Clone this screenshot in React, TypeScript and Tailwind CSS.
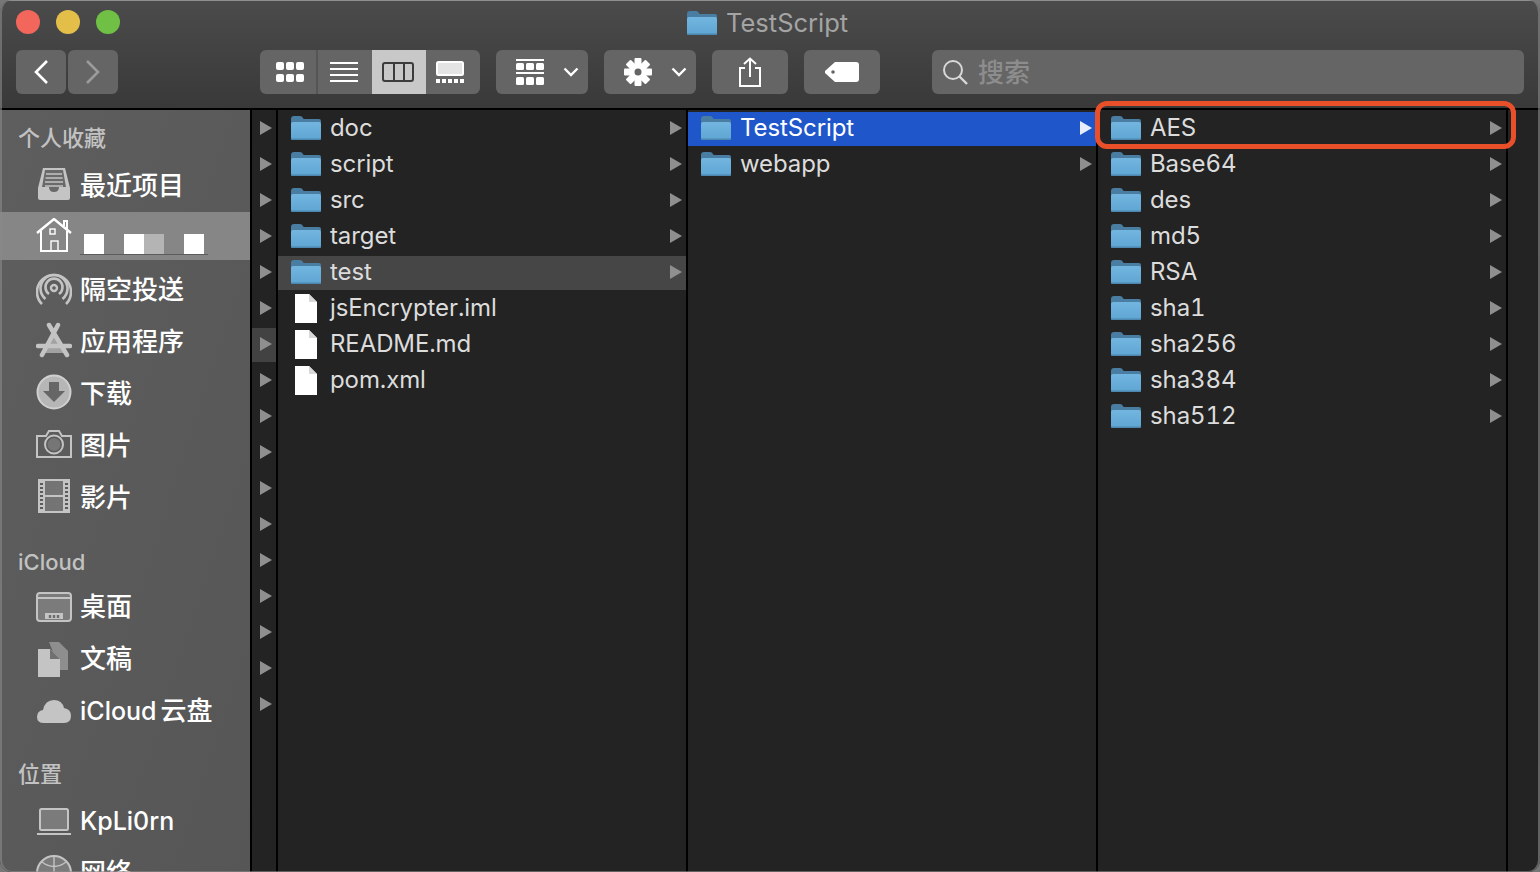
import type { ReactNode } from "react";

const cjk = "font-['Inter','Noto_Sans_CJK_SC',sans-serif]";

function Folder() {
  return (
    <svg viewBox="0 0 30 24" className="w-[30px] h-6 shrink-0">
      <defs>
        <linearGradient id="folderBody" x1="0" y1="0" x2="0" y2="1">
          <stop offset="0" stopColor="#72b6e0" />
          <stop offset="1" stopColor="#5fa5d3" />
        </linearGradient>
      </defs>
      <path d="M0 3 Q0 0 3 0 H9 Q11 0 12 2 L12.6 3 H28 Q30 3 30 5 V9 H0Z" fill="#4a7da2" />
      <rect x="0" y="6" width="30" height="18" rx="2" fill="url(#folderBody)" />
      <rect x="0" y="22.5" width="30" height="1.5" rx="0.75" fill="#4c87b0" />
    </svg>
  );
}

function FileIcon() {
  return (
    <svg viewBox="0 0 22 29" className="w-[22px] h-[29px] shrink-0 ml-1">
      <path d="M0 0 H14 L22 8 V29 H0Z" fill="#ffffff" />
      <path d="M14 0 L22 8 H14Z" fill="#d8d8d8" />
    </svg>
  );
}

function Arrow({ dim = true }: { dim?: boolean }) {
  return (
    <svg viewBox="0 0 12 14" className="w-3 h-3.5 shrink-0">
      <path d="M0 0 L12 7 L0 14Z" fill={dim ? "#8f8f8f" : "#e8effb"} />
    </svg>
  );
}

function Row({
  name,
  kind = "folder",
  arrow = true,
  bg = "",
  active = false,
}: {
  name: string;
  kind?: "folder" | "file";
  arrow?: boolean;
  bg?: string;
  active?: boolean;
}) {
  return (
    <div className="h-9 pt-0.5">
      <div className={`flex h-[34px] items-center pb-0.5 pl-[13px] pr-1 ${bg}`}>
        <div className="w-[39px] shrink-0">{kind === "folder" ? <Folder /> : <FileIcon />}</div>
        <span className={`flex-1 text-[24px] leading-none tracking-[-0.1px] tabular-nums ${active ? "text-white" : "text-[#dcdcdc]"}`}>{name}</span>
        {arrow && <Arrow dim={!active} />}
      </div>
    </div>
  );
}

function ToolButton({ className = "", children }: { className?: string; children: ReactNode }) {
  return <div className={`flex h-11 items-center justify-center rounded-md bg-[#656565] ${className}`}>{children}</div>;
}

function Chevron() {
  return (
    <svg viewBox="0 0 16 10" className="w-4 h-2.5">
      <path d="M1.5 1.5 L8 8 L14.5 1.5" fill="none" stroke="#fff" strokeWidth="2.4" />
    </svg>
  );
}

function GridViewIcon() {
  return (
    <svg viewBox="0 0 28 20" className="w-7 h-5">
      {[0, 10, 20].map((x) => (
        <g key={x}>
          <rect x={x} y="0" width="8" height="8" rx="2" fill="#fff" />
          <rect x={x} y="12" width="8" height="8" rx="2" fill="#fff" />
        </g>
      ))}
    </svg>
  );
}

function ListViewIcon() {
  return (
    <svg viewBox="0 0 28 20" className="w-7 h-5">
      {[1, 7, 13, 19].map((y) => (
        <rect key={y} x="0" y={y - 1} width="28" height="2" fill="#fff" />
      ))}
    </svg>
  );
}

function ColumnViewIcon() {
  return (
    <svg viewBox="0 0 32 20" className="w-8 h-5">
      <rect x="1" y="1" width="30" height="18" rx="2" fill="none" stroke="#3c3c3c" strokeWidth="2" />
      <rect x="11" y="1" width="2" height="18" fill="#3c3c3c" />
      <rect x="21" y="1" width="2" height="18" fill="#3c3c3c" />
    </svg>
  );
}

function GalleryViewIcon() {
  return (
    <svg viewBox="0 0 28 22" className="w-7 h-[22px]">
      <rect x="1" y="1" width="26" height="13" rx="1.5" fill="#e4e4e4" stroke="#fff" strokeWidth="2" />
      {[0, 6, 12, 18, 24].map((x) => (
        <rect key={x} x={x} y="18" width="4" height="4" fill="#fff" />
      ))}
    </svg>
  );
}

function GroupIcon() {
  return (
    <svg viewBox="0 0 28 26" className="w-7 h-[26px]">
      <rect x="0" y="0" width="28" height="2" fill="#fff" />
      <rect x="0" y="13" width="28" height="2" fill="#fff" />
      {[0, 10, 20].map((x) => (
        <g key={x}>
          <rect x={x} y="4" width="8" height="7" rx="1.5" fill="#fff" />
          <rect x={x} y="18" width="8" height="8" rx="1.5" fill="#fff" />
        </g>
      ))}
    </svg>
  );
}

function GearIcon() {
  return (
    <svg viewBox="0 0 28 28" className="w-7 h-7">
      {[0, 45, 90, 135].map((a) => (
        <rect key={a} x="10.5" y="0" width="7" height="28" rx="1" fill="#fff" transform={`rotate(${a} 14 14)`} />
      ))}
      <circle cx="14" cy="14" r="9" fill="#fff" />
      <circle cx="14" cy="14" r="3.5" fill="#656565" />
    </svg>
  );
}

function ShareIcon() {
  return (
    <svg viewBox="0 0 22 30" className="w-[22px] h-[30px]">
      <path d="M6 11 H1 V29 H21 V11 H16" fill="none" stroke="#fff" strokeWidth="2" />
      <path d="M11 20 V2 M5 7 L11 1.5 L17 7" fill="none" stroke="#fff" strokeWidth="2" />
    </svg>
  );
}

function TagIcon() {
  return (
    <svg viewBox="0 0 34 20" className="w-[34px] h-5">
      <path d="M10 0 H31 Q34 0 34 3 V17 Q34 20 31 20 H10 L0 11 V9Z" fill="#fff" />
      <circle cx="8" cy="10" r="1.8" fill="#656565" />
    </svg>
  );
}

function SidebarIcon({ children }: { children: ReactNode }) {
  return (
    <svg viewBox="0 0 36 36" className="w-9 h-9 shrink-0" fill="none" stroke="#c4c4c4" strokeWidth="2">
      {children}
    </svg>
  );
}

const RecentsIcon = (
  <SidebarIcon>
    <path d="M7 2 H29 L34 22 V32 Q34 34 32 34 H4 Q2 34 2 32 V22Z" fill="#c4c4c4" stroke="none" />
    <path d="M9 4 H27 L30 21 H23 Q23 26 18 26 Q13 26 13 21 H6Z" fill="#6a6a6a" stroke="none" />
    <path d="M10 8 H26 M9.5 12 H26.5 M9 16 H27 M9 20 H27" stroke="#c4c4c4" strokeWidth="1.6" />
  </SidebarIcon>
);

const HomeIcon = (
  <svg viewBox="0 0 36 36" className="w-9 h-9 shrink-0" fill="none" stroke="#fff" strokeWidth="2">
    <path d="M1 15 L18 1 L35 15" strokeWidth="2.4" />
    <path d="M28 8 V3 H31 V11" />
    <path d="M5 13 V33 H31 V13" />
    <rect x="14" y="11" width="5" height="5" strokeWidth="1.4" />
    <rect x="15" y="23" width="7" height="10" strokeWidth="1.4" />
  </svg>
);

const AirdropIcon = (
  <SidebarIcon>
    <circle cx="18" cy="18" r="3" strokeWidth="2.4" />
    <path d="M13 24 A8.5 8.5 0 1 1 23 24" strokeWidth="2.6" />
    <path d="M9.5 29 A13.5 13.5 0 1 1 26.5 29" strokeWidth="2.6" />
    <path d="M6 34 A17 17 0 1 1 30 34" strokeWidth="2.6" />
  </SidebarIcon>
);

const AppsIcon = (
  <SidebarIcon>
    <path d="M17.5 10 L7 31 H29Z" fill="#a2a2a2" stroke="none" />
    <path d="M22 3 L6 33 M13 3 L31 33" stroke="#c4c4c4" strokeWidth="4.5" strokeLinecap="round" />
    <path d="M2 24 H34" stroke="#c4c4c4" strokeWidth="4.5" strokeLinecap="round" />
  </SidebarIcon>
);

const DownloadIcon = (
  <SidebarIcon>
    <circle cx="18" cy="18" r="16.5" fill="#b6b6b6" stroke="#d0d0d0" strokeWidth="2" />
    <path d="M13 8 H23 V17 H29 L18 28 L7 17 H13Z" fill="#666666" stroke="none" />
  </SidebarIcon>
);

const PhotoIcon = (
  <SidebarIcon>
    <path d="M1 10 H10 L13 5 H23 L26 10 H35 V31 H1Z" />
    <circle cx="18" cy="18.5" r="9" />
    <circle cx="18" cy="18.5" r="6.5" fill="#767676" stroke="none" />
  </SidebarIcon>
);

const MovieIcon = (
  <svg viewBox="0 0 32 34" className="w-8 h-[34px] shrink-0 mx-0.5" fill="none" stroke="#c4c4c4" strokeWidth="2">
    <rect x="1" y="1" width="30" height="32" />
    <path d="M6 1 V33 M26 1 V33 M6 17 H26" />
    <rect x="7" y="2" width="18" height="14" fill="#747474" stroke="none" />
    <rect x="7" y="18" width="18" height="14" fill="#747474" stroke="none" />
    <path d="M3.5 2 V32 M28.5 2 V32" stroke="#c4c4c4" strokeWidth="3" strokeDasharray="2 2" />
  </svg>
);

const DesktopIcon = (
  <SidebarIcon>
    <rect x="1" y="4" width="34" height="28" rx="3" fill="#7b7b7b" strokeWidth="2" />
    <path d="M1 9 H35" strokeWidth="2" />
    <rect x="9" y="24" width="18" height="6" fill="#c4c4c4" stroke="none" />
    <path d="M14 26 V29 M18 26 V29 M22 26 V29" stroke="#6d6d6d" strokeWidth="2.4" />
  </SidebarIcon>
);

const DocsIcon = (
  <SidebarIcon>
    <path d="M13 1 H23 L32 10 V29 H24 Z" fill="#8e8e8e" stroke="none" />
    <path d="M2 8 H14 L24 18 V36 H2Z" fill="#c4c4c4" stroke="none" />
    <path d="M14 8 L24 18 H14Z" fill="#717171" stroke="none" />
  </SidebarIcon>
);

const CloudIcon = (
  <SidebarIcon>
    <path d="M8 30 Q1 30 1 24 Q1 18 7 17 Q9 7 18 7 Q26 7 28 15 Q35 16 35 23 Q35 30 28 30Z" fill="#c4c4c4" stroke="none" />
  </SidebarIcon>
);

const LaptopIcon = (
  <SidebarIcon>
    <rect x="4" y="6" width="28" height="21" rx="1.5" fill="#7b7b7b" />
    <path d="M1 31 H35" />
  </SidebarIcon>
);

const NetworkIcon = (
  <SidebarIcon>
    <circle cx="18" cy="18" r="17" fill="#7b7b7b" />
    <path d="M1 18 H35 M18 1 V35 M6 7 Q18 16 30 7 M6 29 Q18 20 30 29" strokeWidth="1.4" />
  </SidebarIcon>
);

function SideItem({ icon, label, active = false, labelClass = "text-[26px]", children }: { icon: ReactNode; label?: string; active?: boolean; labelClass?: string; children?: ReactNode }) {
  return (
    <div className={`flex h-12 items-center gap-2 pl-9 ${active ? "bg-[#868686]" : ""}`}>
      {icon}
      {label && <span className={`${cjk} ${labelClass} leading-none font-medium text-white whitespace-nowrap`}>{label}</span>}
      {children}
    </div>
  );
}

function SideHeading({ label, className }: { label: string; className: string }) {
  return <div className={`${cjk} pl-[18px] text-[22px] leading-7 font-medium text-[#c2c2c2] ${className}`}>{label}</div>;
}

export default function App() {
  return (
    <div className="relative w-[1540px] h-[872px] overflow-hidden bg-[#777777]">
      <div className={`${cjk} flex h-full flex-col overflow-hidden rounded-[12px]`}>
        <header className="h-[108px] shrink-0 border-t border-[#8f8f8f] bg-gradient-to-b from-[#4b4b4b] to-[#393939] px-4">
          <div className="relative flex h-[49px] items-start gap-4 pt-[9px]">
            <span className="h-6 w-6 rounded-full bg-[#f2665c]" />
            <span className="h-6 w-6 rounded-full bg-[#e3bf4a]" />
            <span className="h-6 w-6 rounded-full bg-[#6fc044]" />
            <div className="absolute left-[671px] top-[8px] flex items-center gap-[9px] text-[25.5px] leading-7 text-[#a4a4a4]">
              <Folder />
              <span>TestScript</span>
            </div>
          </div>
          <div className="flex items-center">
            <ToolButton className="w-[50px]">
              <svg viewBox="0 0 16 26" className="w-4 h-[26px]"><path d="M14 2 L3 13 L14 24" fill="none" stroke="#fff" strokeWidth="2.6" /></svg>
            </ToolButton>
            <ToolButton className="ml-0.5 w-[50px]">
              <svg viewBox="0 0 16 26" className="w-4 h-[26px]"><path d="M2 2 L13 13 L2 24" fill="none" stroke="#9b9b9b" strokeWidth="2.6" /></svg>
            </ToolButton>
            <div className="ml-[142px] flex h-11 w-[220px] overflow-hidden rounded-md bg-[#656565]">
              <div className="flex w-[58px] items-center justify-center border-r-2 border-[#555] pl-1"><GridViewIcon /></div>
              <div className="flex w-[54px] items-center justify-center pr-0.5"><ListViewIcon /></div>
              <div className="flex w-[54px] items-center justify-center bg-[#c8c8c8] pr-0.5"><ColumnViewIcon /></div>
              <div className="flex w-[54px] items-center justify-center pr-1.5"><GalleryViewIcon /></div>
            </div>
            <ToolButton className="ml-4 w-[92px] justify-start gap-[19px] pl-5"><GroupIcon /><Chevron /></ToolButton>
            <ToolButton className="ml-4 w-[92px] justify-start gap-[19px] pl-5"><GearIcon /><Chevron /></ToolButton>
            <ToolButton className="ml-4 w-[76px]"><ShareIcon /></ToolButton>
            <ToolButton className="ml-4 w-[76px]"><TagIcon /></ToolButton>
            <div className="ml-[52px] flex h-11 w-[592px] items-center gap-2.5 rounded-md bg-[#656565] pl-2.5">
              <svg viewBox="0 0 26 26" className="w-[26px] h-[26px]">
                <circle cx="11" cy="11" r="9" fill="none" stroke="#d8d8d8" strokeWidth="2" />
                <path d="M17.5 17.5 L25 25" stroke="#d8d8d8" strokeWidth="2.4" />
              </svg>
              <span className="pt-0.5 text-[26px] leading-none font-medium text-[#8d8d8d]">搜索</span>
            </div>
          </div>
        </header>
        <div className="flex min-h-0 flex-1 border-t-2 border-black bg-[#232323]">
          <aside className="w-[250px] shrink-0 overflow-hidden bg-gradient-to-br from-[#5e5e5e] to-[#565656]">
            <SideHeading label="个人收藏" className="pt-[14px]" />
            <div className="mt-2 flex flex-col gap-1">
              <SideItem icon={RecentsIcon} label="最近项目" labelClass="text-[26px] pt-1" />
              <SideItem icon={HomeIcon} active>
                <div className="mt-4 flex flex-col">
                  <div className="ml-1 flex">
                    <span className="h-5 w-5 bg-white" />
                    <span className="ml-5 h-5 w-5 bg-white" />
                    <span className="h-5 w-5 bg-[#b4b4b4]" />
                    <span className="ml-5 h-5 w-5 bg-white" />
                  </div>
                  <span className="h-px w-32 rounded-full bg-[#5c5c5c]" />
                </div>
              </SideItem>
              <SideItem icon={AirdropIcon} label="隔空投送" labelClass="text-[26px] pt-1" />
              <SideItem icon={AppsIcon} label="应用程序" labelClass="text-[26px] pt-1" />
              <SideItem icon={DownloadIcon} label="下载" labelClass="text-[26px] pt-1" />
              <SideItem icon={PhotoIcon} label="图片" labelClass="text-[26px] pt-1" />
              <SideItem icon={MovieIcon} label="影片" labelClass="text-[26px] pt-1" />
            </div>
            <SideHeading label="iCloud" className="mt-[28px]" />
            <div className="mt-[7px] flex flex-col gap-1">
              <SideItem icon={DesktopIcon} label="桌面" />
              <SideItem icon={DocsIcon} label="文稿" />
              <SideItem icon={CloudIcon}>
                <span className="whitespace-nowrap text-[25px] leading-none font-medium text-white">
                  iCloud<span className="ml-1 text-[26px]">云盘</span>
                </span>
              </SideItem>
            </div>
            <SideHeading label="位置" className="mt-[25px]" />
            <div className="mt-[9px] flex flex-col gap-1">
              <SideItem icon={LaptopIcon} label="KpLi0rn" labelClass="text-[25px]" />
              <SideItem icon={NetworkIcon} label="网络" />
            </div>
          </aside>
          <div className="w-[28px] shrink-0 border-x-2 border-black">
            {Array.from({ length: 17 }).map((_, i) => (
              <div key={i} className="h-9 pt-0.5">
                <div className={`flex h-[34px] items-center pb-0.5 pl-2 ${i === 6 ? "bg-[#424242]" : ""}`}><Arrow /></div>
              </div>
            ))}
          </div>
          <div className="w-[408px] shrink-0">
            {["doc", "script", "src", "target"].map((n) => <Row key={n} name={n} />)}
            <Row name="test" bg="bg-[#464646]" />
            <Row name="jsEncrypter.iml" kind="file" arrow={false} />
            <Row name="README.md" kind="file" arrow={false} />
            <Row name="pom.xml" kind="file" arrow={false} />
          </div>
          <div className="w-[412px] shrink-0 border-x-2 border-black">
            <Row name="TestScript" bg="bg-[#1f57cb]" active />
            <Row name="webapp" />
          </div>
          <div className="relative w-[410px] shrink-0 border-r-2 border-black">
            {["AES", "Base64", "des", "md5", "RSA", "sha1", "sha256", "sha384", "sha512"].map((n) => <Row key={n} name={n} />)}
            <div className="absolute left-[-3px] top-[-9px] h-[48px] w-[421px] rounded-[12px] border-[5px] border-[#e9502a]" />
          </div>
          <div className="flex-1" />
        </div>
      </div>
      <div className="pointer-events-none absolute inset-0 rounded-[12px] border-x-2 border-b border-[#8a8a8a]/60" />
    </div>
  );
}
